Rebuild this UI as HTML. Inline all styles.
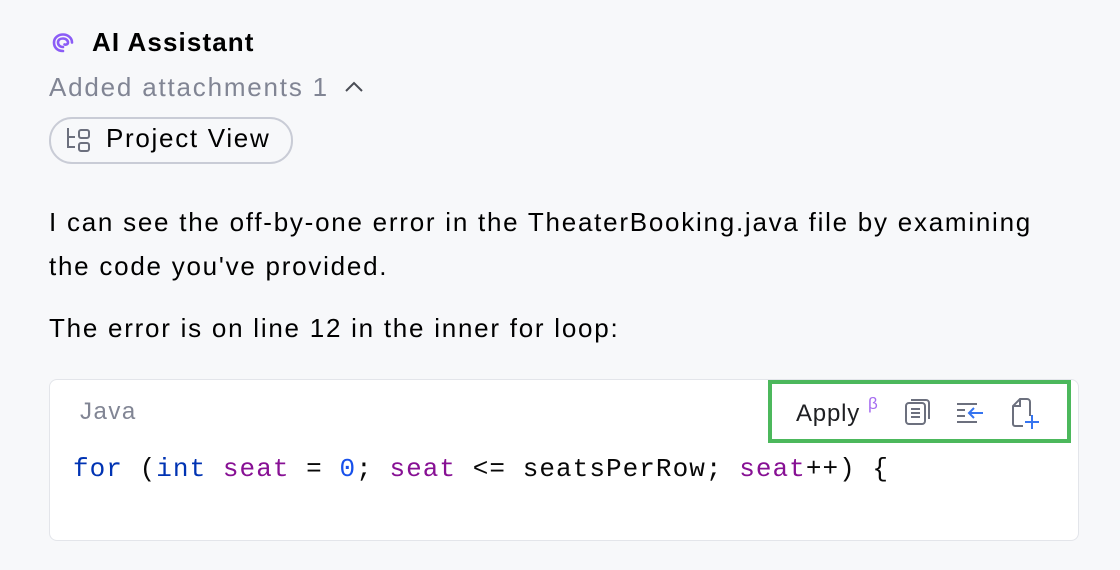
<!DOCTYPE html>
<html><head><style>
body{margin:0;width:1120px;height:570px;background:#f7f8fa;font-family:"Liberation Sans",sans-serif;position:relative;overflow:hidden;color:#000}
.a{position:absolute;white-space:nowrap}
</style></head><body>
<svg class="a" style="left:50px;top:30px" width="26" height="26" viewBox="0 0 26 26" fill="none" stroke="#8b5cf6" stroke-width="2.6" stroke-linecap="round"><path d="M13 21 C7 21 4 17 4 12.5 C4 8 8 4.5 13 4.5 C18 4.5 22 8 22 12.5"/><path d="M13 17 C10 17 8 15 8 12.5 C8 10 10 8.5 13 8.5 C16 8.5 18 10.5 18 12.5 C18 14 16.5 15 14.5 14.5"/></svg>
<div class="a" style="left:92px;top:27px;font-size:26px;font-weight:bold;letter-spacing:1.1px">AI Assistant</div>
<div class="a" style="left:49px;top:72px;font-size:26px;color:#818594;letter-spacing:1.8px">Added attachments 1</div>
<svg class="a" style="left:343px;top:80px" width="22" height="14" viewBox="0 0 22 14" fill="none" stroke="#4a4d55" stroke-width="2"><path d="M3 11 L11 3 L19 11"/></svg>
<div class="a" style="left:49px;top:117px;width:240px;height:43px;border:2px solid #c9ccd6;border-radius:23px"></div>
<svg class="a" style="left:65px;top:126px" width="30" height="30" viewBox="0 0 30 30" fill="none" stroke="#6c707e" stroke-width="2"><path d="M3 2 V21 H10 M3 11 H10"/><rect x="14" y="4" width="10" height="8" rx="2"/><rect x="14" y="17" width="10" height="8" rx="2"/></svg>
<div class="a" style="left:106px;top:123px;font-size:26px;letter-spacing:1.7px">Project View</div>
<div class="a" style="left:49px;top:200px;font-size:26px;line-height:44px;letter-spacing:1.75px">I can see the off-by-one error in the TheaterBooking.java file by examining<br>the code you've provided.</div>
<div class="a" style="left:49px;top:313px;font-size:26px;letter-spacing:1.75px">The error is on line 12 in the inner for loop:</div>
<div class="a" style="left:49px;top:379px;width:1028px;height:160px;background:#fff;border:1px solid #e3e5ea;border-radius:8px"></div>
<div class="a" style="left:80px;top:398px;font-size:24px;color:#818594;letter-spacing:1.5px">Java</div>
<div class="a" style="left:73px;top:454px;font-family:'Liberation Mono',monospace;font-size:26px;color:#080808;letter-spacing:1.05px"><span style="color:#0033b3">for</span> (<span style="color:#0033b3">int</span> <span style="color:#871094">seat</span> = <span style="color:#1750eb">0</span>; <span style="color:#871094">seat</span> &lt;= seatsPerRow; <span style="color:#871094">seat</span>++) {</div>
<div class="a" style="left:768px;top:380px;width:295px;height:55px;border:4px solid #4cb85c"></div>
<div class="a" style="left:796px;top:400px;font-size:24px;color:#1e1f22;letter-spacing:0.8px">Apply</div>
<div class="a" style="left:868px;top:394px;font-size:17px;color:#a56cf0">β</div>
<svg class="a" style="left:903px;top:398px" width="30" height="30" viewBox="0 0 30 30" fill="none" stroke="#6c707e" stroke-width="2"><rect x="3" y="5" width="19" height="21" rx="3"/><path d="M8 2 H23 a3 3 0 0 1 3 3 V21"/><path d="M8 11 H17 M8 15 H17 M8 19 H17"/></svg>
<svg class="a" style="left:955px;top:398px" width="32" height="28" viewBox="0 0 32 28" fill="none" stroke-width="2"><path d="M2 6 H22 M2 12 H10 M2 18 H10 M2 24 H22" stroke="#6c707e"/><path d="M14 15 H28 M19 10 L14 15 L19 20" stroke="#3574f0"/></svg>
<svg class="a" style="left:1010px;top:396px" width="32" height="34" viewBox="0 0 32 34" fill="none" stroke-width="2"><path d="M20 20 V6 a3 3 0 0 0 -3 -3 H10 L3 10 V28 a2 2 0 0 0 2 2 H13 M10 3 V10 H3" stroke="#6c707e"/><path d="M22 19 V33 M15 26 H29" stroke="#3574f0"/></svg>
</body></html>
